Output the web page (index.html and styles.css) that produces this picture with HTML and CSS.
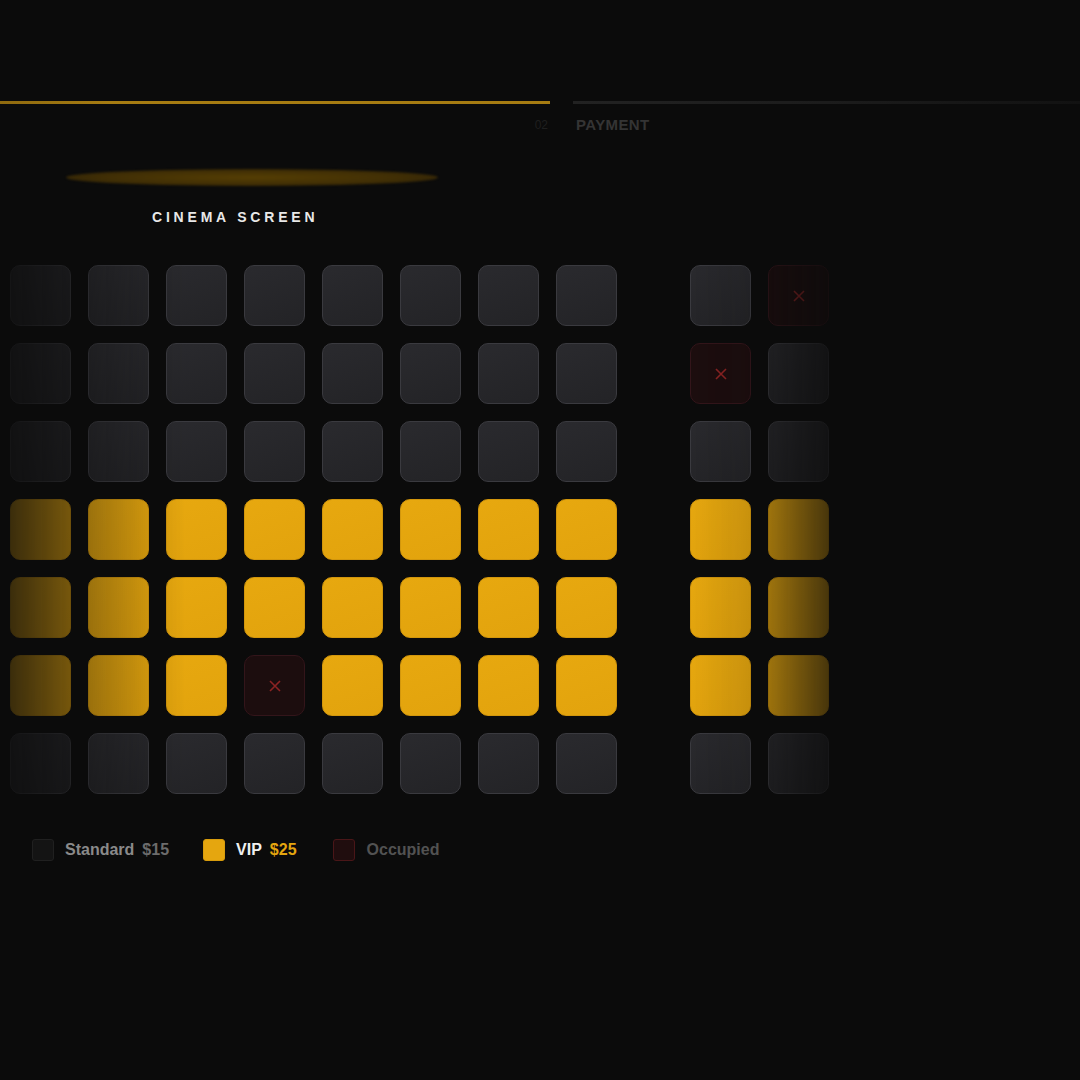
FILE: index.html
```html
<!DOCTYPE html>
<html lang="en">
  <head>
    <meta charset="UTF-8" />
    <meta name="viewport" content="width=device-width, initial-scale=1.0" />
    <title>Select seats</title>

    <link rel="stylesheet" href="styles.css">
  </head>
  <body>
    <main>
      <div class="stepper">
        <span class="step-bar done"></span>
        <span class="step-bar"></span>
        <span class="step-num">02</span>
        <span class="step-name">PAYMENT</span>
      </div>

      <div class="screen">
        <div class="screen-glow"></div>
        <p class="screen-label">CINEMA SCREEN</p>
      </div>

      <div class="seat-map">
        <!-- row A -->
        <div class="seat"></div><div class="seat"></div><div class="seat"></div><div class="seat"></div>
        <div class="seat"></div><div class="seat"></div><div class="seat"></div><div class="seat"></div>
        <div class="aisle"></div>
        <div class="seat"></div>
        <div class="seat taken"><svg viewBox="0 0 12 12"><path d="M1 1L11 11M11 1L1 11" /></svg></div>

        <!-- row B -->
        <div class="seat"></div><div class="seat"></div><div class="seat"></div><div class="seat"></div>
        <div class="seat"></div><div class="seat"></div><div class="seat"></div><div class="seat"></div>
        <div class="aisle"></div>
        <div class="seat taken"><svg viewBox="0 0 12 12"><path d="M1 1L11 11M11 1L1 11" /></svg></div>
        <div class="seat"></div>

        <!-- row C -->
        <div class="seat"></div><div class="seat"></div><div class="seat"></div><div class="seat"></div>
        <div class="seat"></div><div class="seat"></div><div class="seat"></div><div class="seat"></div>
        <div class="aisle"></div>
        <div class="seat"></div><div class="seat"></div>

        <!-- row D (vip) -->
        <div class="seat vip"></div><div class="seat vip"></div><div class="seat vip"></div><div class="seat vip"></div>
        <div class="seat vip"></div><div class="seat vip"></div><div class="seat vip"></div><div class="seat vip"></div>
        <div class="aisle"></div>
        <div class="seat vip"></div><div class="seat vip"></div>

        <!-- row E (vip) -->
        <div class="seat vip"></div><div class="seat vip"></div><div class="seat vip"></div><div class="seat vip"></div>
        <div class="seat vip"></div><div class="seat vip"></div><div class="seat vip"></div><div class="seat vip"></div>
        <div class="aisle"></div>
        <div class="seat vip"></div><div class="seat vip"></div>

        <!-- row F (vip) -->
        <div class="seat vip"></div><div class="seat vip"></div><div class="seat vip"></div>
        <div class="seat taken"><svg viewBox="0 0 12 12"><path d="M1 1L11 11M11 1L1 11" /></svg></div>
        <div class="seat vip"></div><div class="seat vip"></div><div class="seat vip"></div><div class="seat vip"></div>
        <div class="aisle"></div>
        <div class="seat vip"></div><div class="seat vip"></div>

        <!-- row G -->
        <div class="seat"></div><div class="seat"></div><div class="seat"></div><div class="seat"></div>
        <div class="seat"></div><div class="seat"></div><div class="seat"></div><div class="seat"></div>
        <div class="aisle"></div>
        <div class="seat"></div><div class="seat"></div>
      </div>

      <div class="legend">
        <div class="legend-item">
          <span class="swatch"></span>
          <span class="legend-name">Standard</span>
          <span class="legend-price">$15</span>
        </div>
        <div class="legend-item">
          <span class="swatch vip"></span>
          <span class="legend-name vip">VIP</span>
          <span class="legend-price vip">$25</span>
        </div>
        <div class="legend-item">
          <span class="swatch taken"></span>
          <span class="legend-name taken">Occupied</span>
        </div>
      </div>
    </main>
  </body>
</html>
```

FILE: styles.css
```css
body {
  margin: 0;
  min-height: 1080px;
  background-color: #0b0b0b;
  font-family: 'Liberation Sans', Arial, sans-serif;
  color: #e6e6e6;
}

main {
  display: flex;
  flex-direction: column;
}

/* booking steps */
.stepper {
  display: grid;
  grid-template-columns: 550px 1fr;
  column-gap: 23px;
  row-gap: 12px;
  padding-top: 101px;
}

.step-bar {
  height: 3px;
  background: linear-gradient(to right, #222, #1c1c1c 50%, #121212);
}

.step-bar.done {
  background: linear-gradient(to right, #8f6a0f, #a67c12 20%, #a67c12);
}

.step-num {
  padding-right: 2px;
  text-align: right;
  font-size: 12px;
  line-height: 18px;
  color: #1f1f1f;
}

.step-name {
  padding-left: 3px;
  font-size: 15px;
  line-height: 18px;
  font-weight: bold;
  letter-spacing: 0.4px;
  color: #343434;
}

/* screen */
.screen {
  margin-top: 35px;
}

.screen-glow {
  width: 372px;
  height: 17px;
  margin-left: 66px;
  border-radius: 50%;
  background: radial-gradient(ellipse at center, #553e04 0%, #412f05 55%, #231a09 100%);
  filter: blur(1px);
}

.screen-label {
  margin: 23px 0 0 152px;
  font-size: 14px;
  line-height: 16px;
  font-weight: bold;
  letter-spacing: 3.8px;
  color: #e8e8e8;
}

/* seats */
.seat-map {
  display: grid;
  grid-template-columns: repeat(8, 61px) 39px repeat(2, 61px);
  grid-auto-rows: 61px;
  gap: 17px;
  width: 819px;
  margin: 40px 0 0 10px;
  -webkit-mask-image: linear-gradient(to right, rgba(0, 0, 0, 0.22) 0, rgba(0, 0, 0, 0.5) 62px, rgba(0, 0, 0, 0.66) 78px, rgba(0, 0, 0, 0.9) 140px, #000 175px, #000 680px, rgba(0, 0, 0, 0.87) 741px, rgba(0, 0, 0, 0.68) 758px, rgba(0, 0, 0, 0.28) 819px);
  mask-image: linear-gradient(to right, rgba(0, 0, 0, 0.22) 0, rgba(0, 0, 0, 0.5) 62px, rgba(0, 0, 0, 0.66) 78px, rgba(0, 0, 0, 0.9) 140px, #000 175px, #000 680px, rgba(0, 0, 0, 0.87) 741px, rgba(0, 0, 0, 0.68) 758px, rgba(0, 0, 0, 0.28) 819px);
}

.seat {
  box-sizing: border-box;
  display: flex;
  justify-content: center;
  align-items: center;
  border-radius: 10px;
  border: 1px solid #3a3a3f;
  background: linear-gradient(160deg, #2a2a2e, #232326);
}

.seat.vip {
  border-color: #d2960c;
  background: linear-gradient(160deg, #e7a80f, #e2a30d);
}

.seat.taken {
  border-color: #33151a;
  background: #1c0d0e;
}

.seat svg {
  width: 12px;
  height: 12px;
  stroke: #8c2323;
  stroke-width: 1.6;
  fill: none;
}

/* legend */
.legend {
  display: flex;
  gap: 34px;
  margin: 45px 0 0 32px;
}

.legend-item {
  display: flex;
  align-items: center;
  font-size: 16px;
  font-weight: bold;
}

.swatch {
  box-sizing: border-box;
  width: 22px;
  height: 22px;
  margin-right: 11px;
  border-radius: 3px;
  border: 1px solid #202020;
  background-color: #141414;
}

.swatch.vip {
  border-color: #d89c0c;
  background-color: #e5a60f;
}

.swatch.taken {
  margin-right: 12px;
  border-color: #4a1618;
  background-color: #200d0e;
}

.legend-name {
  color: #8a8a8a;
}

.legend-name.vip {
  color: #f0f0f0;
}

.legend-name.taken {
  color: #525252;
}

.legend-price {
  margin-left: 8px;
  color: #6c6c6c;
}

.legend-price.vip {
  color: #e5a60f;
}

.legend-item:last-child {
  margin-left: 2px;
}
```
